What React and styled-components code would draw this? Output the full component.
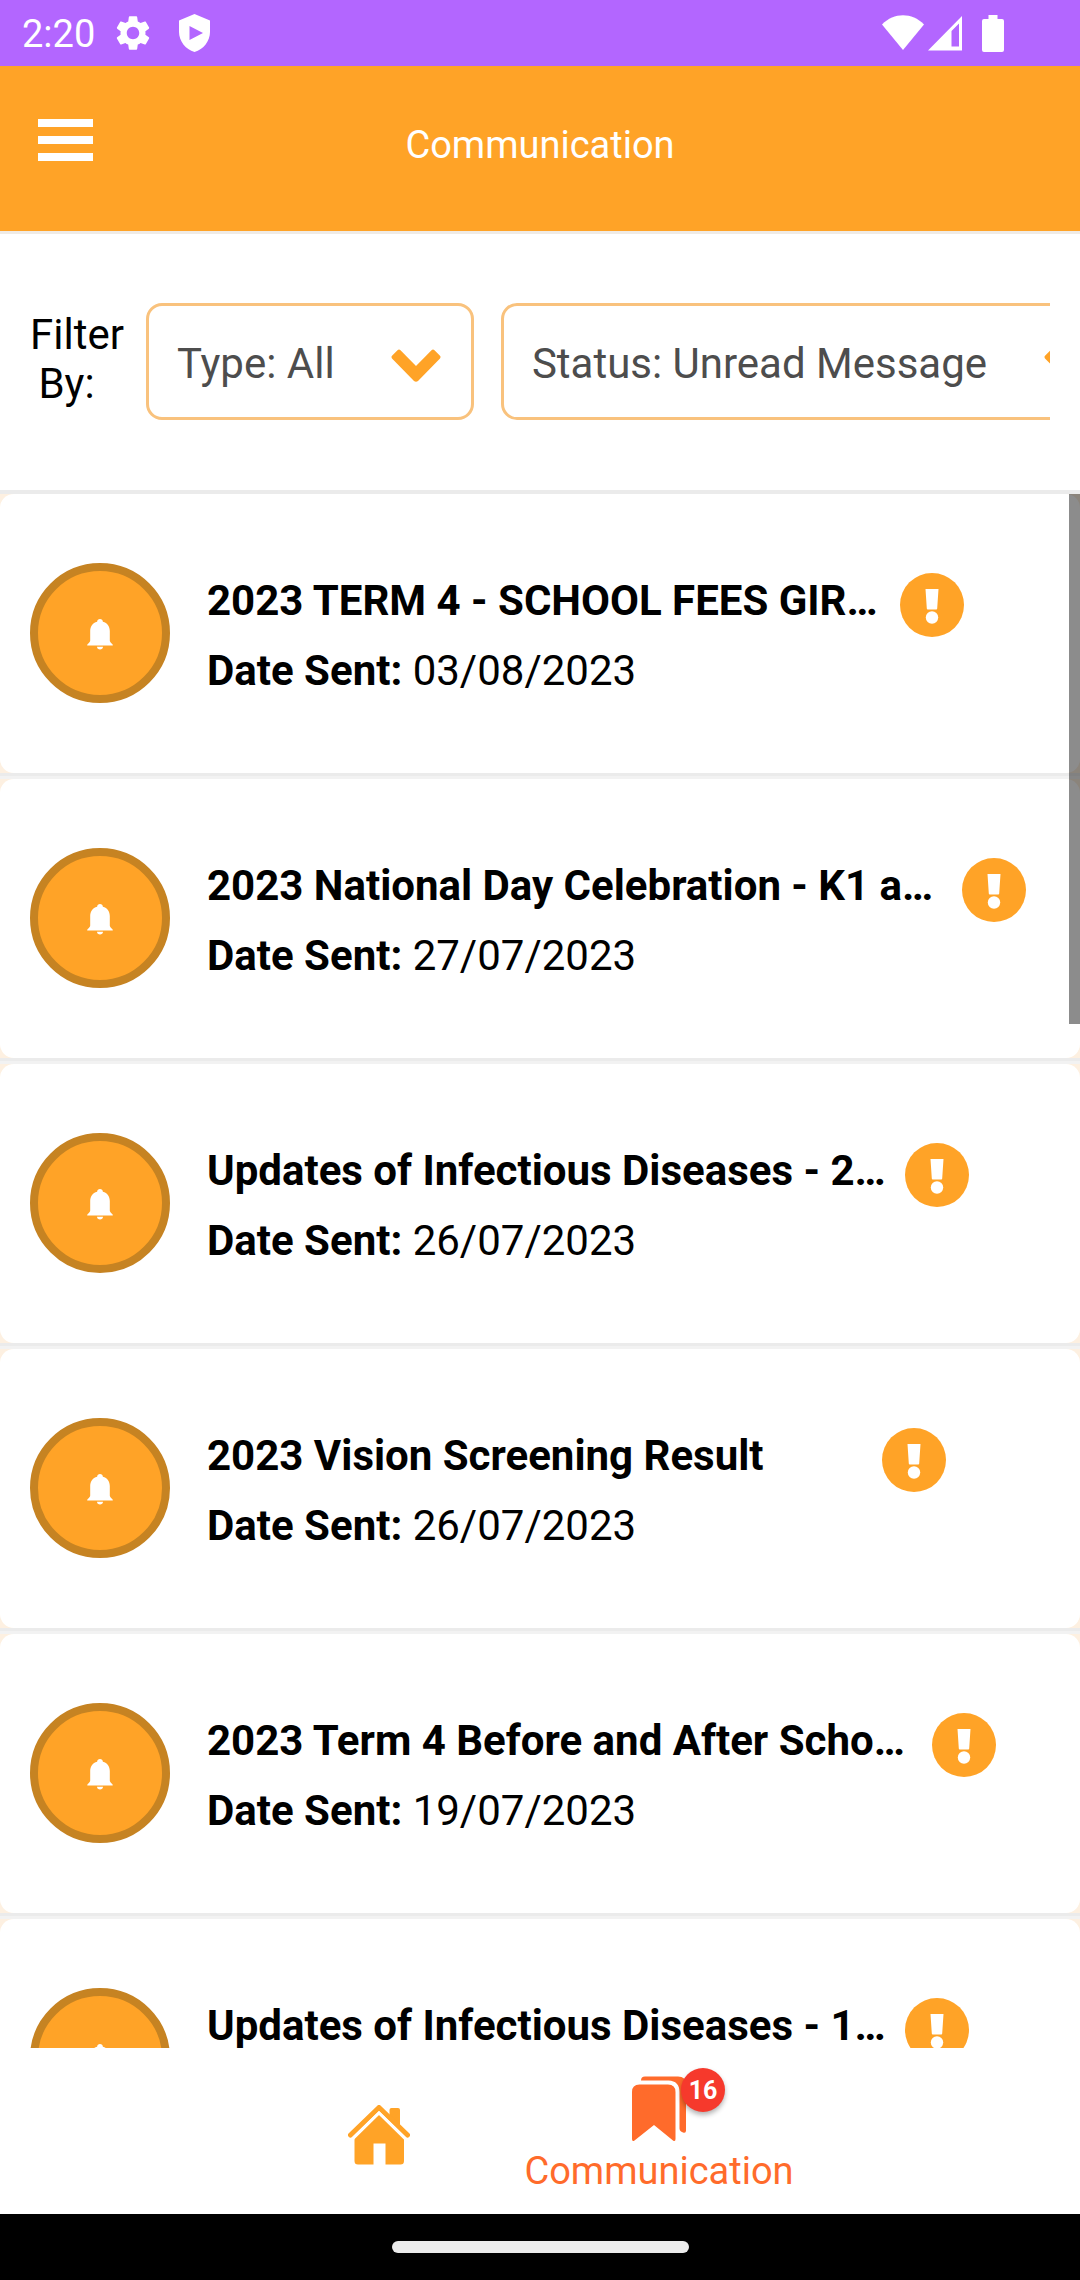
import React from "react";
import styled, { createGlobalStyle } from "styled-components";

const ORANGE = "#ffa327";

const GlobalStyle = createGlobalStyle`
  *, *::before, *::after { box-sizing: border-box; }
  body { margin: 0; background: #fff; font-family: Roboto, "Noto Sans", sans-serif; color: #000; }
  button, select { font: inherit; color: inherit; }
`;

const Screen = styled.div`
  display: flex;
  flex-direction: column;
  height: 100vh;
  overflow: hidden;
`;

const StatusBar = styled.div`
  display: flex;
  align-items: center;
  justify-content: space-between;
  height: 66px;
  flex: none;
  padding: 0 76px 0 22px;
  background: #b366ff;
  color: #fff;
`;

const StatusGroup = styled.div`
  display: flex;
  align-items: center;
  gap: ${(p) => p.$gap}px;
`;

const Clock = styled.span`
  font-size: 38px;
  line-height: 46px;
  padding-top: 2px;
  margin-right: -8px;
`;

const Icon = styled.svg`
  display: block;
  flex: none;
`;

const Header = styled.header`
  display: grid;
  grid-template-columns: 1fr auto 1fr;
  align-items: center;
  height: 168px;
  flex: none;
  padding: 0 38px 8px;
  background: ${ORANGE};
  color: #fff;
  border-bottom: 3px solid #efebe6;
`;

const MenuButton = styled.button`
  justify-self: start;
  padding: 0 0 9px;
  border: 0;
  background: none;
  cursor: pointer;
`;

const HeaderTitle = styled.h1`
  margin: 0;
  font-size: 38px;
  line-height: 46px;
  font-weight: 400;
`;

const FilterBar = styled.section`
  display: flex;
  align-items: center;
  flex: none;
  height: 260px;
  padding: 0 30px 1px;
  border-bottom: 4px solid #ebebeb;
`;

const FilterLabel = styled.p`
  flex: none;
  margin: 0;
  padding: 0 22px 6px 0;
  font-size: 42px;
  line-height: 49px;
  text-align: center;
  white-space: pre;
`;

const FilterList = styled.div`
  display: flex;
  flex: 1;
  min-width: 0;
  gap: 27px;
  overflow-x: auto;
  scrollbar-width: none;
`;

const SelectBox = styled.div`
  display: grid;
  flex: none;
  align-items: center;
`;

const Select = styled.select`
  grid-area: 1 / 1;
  height: 117px;
  padding: 4px 136px 0 28px;
  border: 3px solid #f9c27d;
  border-radius: 16px;
  appearance: none;
  background: #fff;
  color: #4d4d4d;
  font-size: 42px;
`;

const Chevron = styled(Icon)`
  grid-area: 1 / 1;
  justify-self: end;
  margin-right: 33px;
  margin-top: 8px;
  pointer-events: none;
`;

const ListArea = styled.main`
  position: relative;
  flex: 1;
  min-height: 0;
  background: #fdf0e1;
`;

const MessageList = styled.ul`
  height: 100%;
  margin: 0;
  padding: 0;
  list-style: none;
  overflow-y: auto;
  scrollbar-width: none;
`;

const MessageItem = styled.li`
  border-bottom: 3px solid #f2f2f2;
`;

const MessageInner = styled.div`
  border-bottom: 3px solid #ebebeb;
`;

const Card = styled.article`
  display: flex;
  align-items: center;
  gap: 37px;
  height: 279px;
  padding: 0 30px 1px;
  border-radius: 14px;
  background: #fff;
`;

const Avatar = styled.div`
  display: grid;
  place-items: center;
  flex: none;
  width: 140px;
  height: 140px;
  padding-top: 2px;
  border: 8px solid #c68322;
  border-radius: 50%;
  background: ${ORANGE};
`;

const MessageBody = styled.div`
  display: flex;
  flex-direction: column;
  font-size: 42px;
  padding-top: 5px;
`;

const TitleRow = styled.div`
  display: flex;
  align-items: center;
  height: 70px;
`;

const Title = styled.h2`
  flex: none;
  width: ${(p) => p.$width}px;
  margin: 0;
  font-size: 42px;
  line-height: 70px;
  font-weight: 700;
  white-space: nowrap;
`;

const Alert = styled(Icon)`
  margin-top: 8px;
`;

const DateLine = styled.p`
  margin: 0;
  line-height: 70px;
`;

const ScrollThumb = styled.div`
  position: absolute;
  top: 0;
  right: 0;
  width: 11px;
  height: 530px;
  background: rgba(0, 0, 0, 0.45);
`;

const BottomNav = styled.nav`
  display: flex;
  justify-content: center;
  align-items: center;
  gap: 52px;
  flex: none;
  height: 166px;
  padding-top: 7px;
  background: #fff;
`;

const NavLink = styled.a`
  display: flex;
  flex-direction: column;
  align-items: center;
  gap: 6px;
  padding: 0 ${(p) => (p.$iconOnly ? 62 : 0)}px;
  color: ${(p) => (p.$active ? "#ff6b2b" : ORANGE)};
  font-size: 38px;
  line-height: 46px;
  text-decoration: none;
`;

const BadgeAnchor = styled.span`
  position: relative;
  display: block;
`;

const Badge = styled.span`
  position: absolute;
  top: -8px;
  left: 49px;
  width: 44px;
  height: 44px;
  border-radius: 50%;
  background: #f6392c;
  box-shadow: 0 3px 5px rgba(0, 0, 0, 0.3);
  color: #fff;
  font-size: 25px;
  line-height: 46px;
  font-weight: 700;
  text-align: center;
`;

const GestureBar = styled.footer`
  display: grid;
  place-items: center;
  flex: none;
  height: 66px;
  background: #000;
`;

const GestureHandle = styled.div`
  width: 297px;
  height: 12px;
  border-radius: 6px;
  background: #ececec;
`;

const messages = [
  { title: "2023 TERM 4 - SCHOOL FEES GIR…", date: "03/08/2023", width: 693 },
  { title: "2023 National Day Celebration - K1 a…", date: "27/07/2023", width: 755 },
  { title: "Updates of Infectious Diseases - 2…", date: "26/07/2023", width: 698 },
  { title: "2023 Vision Screening Result", date: "26/07/2023", width: 675 },
  { title: "2023 Term 4 Before and After Scho…", date: "19/07/2023", width: 725 },
  { title: "Updates of Infectious Diseases - 1…", date: "19/07/2023", width: 698 },
];

function FilterSelect({ name, value }) {
  return (
    <SelectBox>
      <Select aria-label={name} defaultValue={value}>
        <option value={value}>{`${name}: ${value}`}</option>
      </Select>
      <Chevron width="50" height="33" viewBox="0 0 50 33" aria-hidden="true">
        <path
          d="M1 9.500 Q0 8 1 6.800 L6.500 1.200 Q8 0 9.500 1.200 L25 17 L40.500 1.200 Q42 0 43.500 1.200 L49 6.800 Q50 8 49 9.500 L27 32 Q25 33.500 23 32Z"
          fill={ORANGE}
        />
      </Chevron>
    </SelectBox>
  );
}

function Message({ title, date, width }) {
  return (
    <MessageItem>
      <MessageInner>
        <Card>
          <Avatar>
            <Icon width="26" height="31" viewBox="0 0 26 31" fill="#fff" aria-hidden="true">
              <path d="M13 0c1.700 0 2.700 1 2.900 2.700C20.500 4 22.800 7.500 22.800 12v9.500c0 1 .7 2 2.400 3.400.7.700.8 1.600.3 1.600H.5c-.5 0-.4-.9.3-1.600C2.500 23.500 3.200 22.500 3.200 21.500V12c0-4.500 2.300-8 6.900-9.300C10.300 1 11.300 0 13 0z" />
              <path d="M10 27.700h6c0 1.800-1.400 2.800-3 2.800s-3-1-3-2.800z" />
            </Icon>
          </Avatar>
          <MessageBody>
            <TitleRow>
              <Title $width={width}>{title}</Title>
              <Alert width="64" height="64" viewBox="0 0 64 64" role="img" aria-label="Unread">
                <circle cx="32" cy="32" r="32" fill={ORANGE} />
                <path d="M25.500 16h13l-1.300 19.500a1 1 0 0 1-1 1h-8.400a1 1 0 0 1-1-1z" fill="#fff" />
                <circle cx="32" cy="44.500" r="6.200" fill="#fff" />
              </Alert>
            </TitleRow>
            <DateLine>
              <b>Date Sent:</b> {date}
            </DateLine>
          </MessageBody>
        </Card>
      </MessageInner>
    </MessageItem>
  );
}

export default function App() {
  return (
    <Screen>
      <GlobalStyle />
      <StatusBar>
        <StatusGroup $gap={29}>
          <Clock>2:20</Clock>
          <Icon width="34" height="36" viewBox="2.200 2 19.600 20" fill="#fff" aria-hidden="true">
            <path d="M19.140 12.940c.04-.3.060-.61.060-.94 0-.32-.02-.64-.07-.94l2.030-1.580c.18-.14.230-.41.120-.61l-1.920-3.320c-.12-.22-.37-.29-.59-.22l-2.390.96c-.5-.38-1.030-.7-1.620-.94l-.36-2.540c-.04-.24-.24-.41-.48-.41h-3.840c-.24 0-.43.17-.47.41l-.36 2.540c-.59.240-1.130.570-1.620.940l-2.390-.96c-.22-.08-.47 0-.59.220L2.740 8.870c-.12.210-.08.470.120.610l2.030 1.580c-.05.300-.09.630-.09.940s.02.640.070.940l-2.030 1.580c-.18.140-.23.410-.12.610l1.920 3.320c.12.220.37.290.59.220l2.390-.96c.5.380 1.030.700 1.620.940l.36 2.540c.05.240.240.410.480.410h3.840c.24 0 .44-.17.47-.41l.36-2.540c.59-.24 1.130-.56 1.620-.94l2.390.96c.22.080.47 0 .59-.22l1.920-3.320c.12-.22.070-.47-.12-.61l-2.010-1.580zM12 15.600c-1.980 0-3.600-1.620-3.600-3.600s1.620-3.600 3.600-3.600 3.600 1.620 3.600 3.600-1.620 3.600-3.600 3.600z" />
          </Icon>
          <Icon width="31" height="38" viewBox="0 0 31 38" fill="#fff" aria-hidden="true">
            <path
              fillRule="evenodd"
              d="M15.500 0L31 6.500V18c0 9-6.500 17.500-15.500 20C6.500 35.500 0 27 0 18V6.500zM10.500 12v14L24 19z"
            />
          </Icon>
        </StatusGroup>
        <StatusGroup $gap={4}>
          <Icon width="42" height="36" viewBox="0 0 42 36" fill="#fff" aria-hidden="true">
            <path d="M21 35L0 9.500C12-2.700 30-2.700 42 9.500z" />
          </Icon>
          <Icon width="50" height="36" viewBox="0 0 50 36" fill="#fff" aria-hidden="true">
            <path fillRule="evenodd" d="M0 35.500L34 1V35.500zM23.500 16V31.500H31V8.500z" />
          </Icon>
          <Icon width="22" height="37" viewBox="0 0 22 37" fill="#fff" aria-hidden="true">
            <path d="M6.500 0h9v4H20a2 2 0 0 1 2 2v29a2 2 0 0 1-2 2H2a2 2 0 0 1-2-2V6a2 2 0 0 1 2-2h4.500z" />
          </Icon>
        </StatusGroup>
      </StatusBar>

      <Header>
        <MenuButton aria-label="Open menu">
          <Icon width="55" height="42" viewBox="0 0 55 42" fill="#fff" aria-hidden="true">
            <path d="M0 0h55v8H0zM0 17h55v8H0zM0 34h55v8H0z" />
          </Icon>
        </MenuButton>
        <HeaderTitle>Communication</HeaderTitle>
      </Header>

      <FilterBar>
        <FilterLabel>{"Filter\nBy:  "}</FilterLabel>
        <FilterList>
          <FilterSelect name="Type" value="All" />
          <FilterSelect name="Status" value="Unread Message" />
        </FilterList>
      </FilterBar>

      <ListArea>
        <MessageList>
          {messages.map((message) => (
            <Message key={message.title} {...message} />
          ))}
        </MessageList>
        <ScrollThumb />
      </ListArea>

      <BottomNav>
        <NavLink href="#home" $iconOnly aria-label="Home">
          <Icon width="62" height="60" viewBox="0 0 62 60" aria-hidden="true">
            <path d="M41.500 14V5q0-2 2-2h6.500q2 0 2 2v19z" fill={ORANGE} />
            <path d="M2.500 30L31 2.500L59.500 30" fill="none" stroke={ORANGE} strokeWidth="5" strokeLinecap="round" strokeLinejoin="round" />
            <path
              d="M31 9L56 33V56q0 3.500-3.500 3.500H37.500V38.500h-12V59.500H10Q6.500 59.500 6.500 56V33z"
              fill={ORANGE}
            />
            <path d="M4 34.500L31 8L58 34.500" fill="none" stroke="#fff" strokeWidth="3" />
          </Icon>
        </NavLink>
        <NavLink href="#communication" $active aria-current="page">
          <BadgeAnchor>
            <Icon width="54" height="66" viewBox="0 0 54 66" fill="currentColor" aria-hidden="true">
              <path d="M0 16q0-7.500 7.500-7.500h28.500q7.500 0 7.500 7.500v47q0 3-2.500 1.500L22 49 2.500 64.500Q0 66 0 63z" />
              <path d="M9 4.500Q9 .5 13 .5h33q8 0 8 8v46q0 3-3 2l-2-1q-1.500-1-1.500-3V16q0-11-11-11.500z" />
            </Icon>
            <Badge>16</Badge>
          </BadgeAnchor>
          Communication
        </NavLink>
      </BottomNav>

      <GestureBar>
        <GestureHandle />
      </GestureBar>
    </Screen>
  );
}
